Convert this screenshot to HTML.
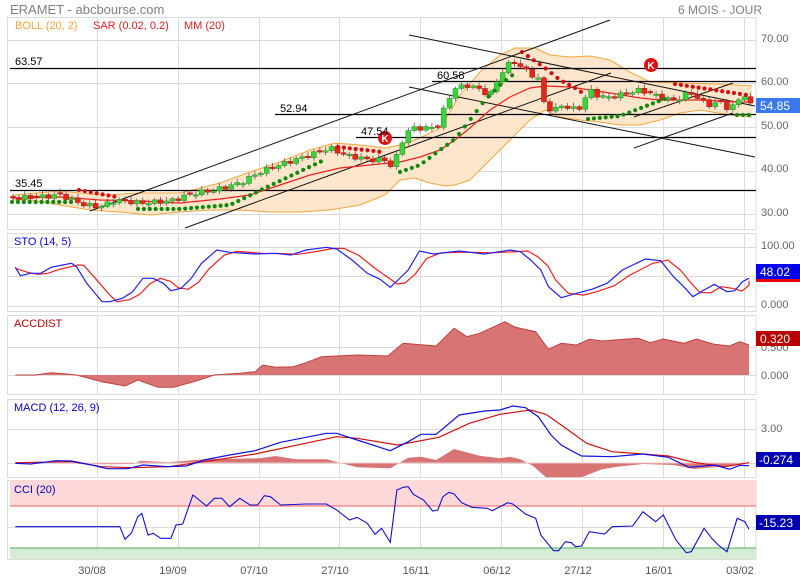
<!DOCTYPE html>
<html><head><meta charset="utf-8"><style>
html,body{margin:0;padding:0;background:#fff;width:800px;height:580px;overflow:hidden}
svg{display:block;font-family:"Liberation Sans",sans-serif}
</style></head><body>
<svg id="s" width="800" height="580" viewBox="0 0 800 580" xmlns="http://www.w3.org/2000/svg">
<rect width="800" height="580" fill="#fff"/>
<text x="10" y="14" font-size="13" fill="#808080">ERAMET - abcbourse.com</text>
<text x="678" y="14" font-size="12" fill="#808080">6 MOIS - JOUR</text>
<g id="grid" stroke="#dcdcdc" stroke-width="1" fill="none"></g>
<rect x="10" y="480" width="746" height="26" fill="#fdd8d8"/>
<rect x="10" y="548" width="746" height="11" fill="#d6ecd6"/>
<line x1="10" y1="506" x2="756" y2="506" stroke="#f06060"/>
<line x1="10" y1="548" x2="756" y2="548" stroke="#50b050"/>
<g id="main"></g>
<g id="lower"></g>
<g font-size="11">
<text x="15" y="29" fill="#f5a53a">BOLL (20, 2)</text>
<text x="93" y="29" fill="#e02020">SAR (0.02, 0.2)</text>
<text x="184" y="29" fill="#e02020">MM (20)</text>
<text x="15" y="65" fill="#000">63.57</text>
<text x="15" y="187" fill="#000">35.45</text>
<text x="280" y="112" fill="#000">52.94</text>
<text x="361" y="135" fill="#000">47.54</text>
<text x="437" y="79" fill="#000">60.58</text>
<text x="14" y="245" fill="#0000e0">STO (14, 5)</text>
<text x="14" y="327" fill="#c00000">ACCDIST</text>
<text x="14" y="411" fill="#0000c0">MACD (12, 26, 9)</text>
<text x="14" y="493" fill="#0000c0">CCI (20)</text>
<g fill="#666">
<text x="761" y="42">70.00</text><text x="761" y="85">60.00</text><text x="761" y="129">50.00</text><text x="761" y="172">40.00</text><text x="761" y="216">30.00</text>
<text x="761" y="249">100.00</text><text x="761" y="308">0.000</text>
<text x="761" y="379">0.000</text><text x="761" y="351">0.500</text>
<text x="761" y="432">3.00</text>
</g>
<g fill="#555" text-anchor="middle">
<text x="92" y="574">30/08</text><text x="173" y="574">19/09</text><text x="254" y="574">07/10</text><text x="335" y="574">27/10</text><text x="416" y="574">16/11</text><text x="497" y="574">06/12</text><text x="578" y="574">27/12</text><text x="659" y="574">16/01</text><text x="740" y="574">03/02</text>
</g>
<rect x="756" y="98" width="44" height="15" fill="#3a78f0"/><text x="760" y="110" fill="#fff" font-size="12">54.85</text>
<rect x="756" y="264" width="44" height="15" fill="#0000ee"/><rect x="756" y="279" width="44" height="3" fill="#ee0000"/><text x="760" y="276" fill="#fff" font-size="12">48.02</text>
<rect x="756" y="331" width="44" height="15" fill="#b80000"/><text x="760" y="343" fill="#fff" font-size="12">0.320</text>
<rect x="756" y="452" width="44" height="15" fill="#0000b0"/><text x="759" y="464" fill="#fff" font-size="12">-0.274</text>
<rect x="756" y="515" width="44" height="15" fill="#0000b0"/><text x="759" y="527" fill="#fff" font-size="12">-15.23</text>
</g>
</svg>
<script>
var NS="http://www.w3.org/2000/svg";
function el(p,t,a){var e=document.createElementNS(NS,t);for(var k in a)e.setAttribute(k,a[k]);p.appendChild(e);return e;}
var G=document.getElementById('grid'),M=document.getElementById('main'),L=document.getElementById('lower');
var panels=[[17,229],[233,311],[315,394],[399,477],[480,559]];
var vx=[97,178,259,339,420,501,582,663,744];
panels.forEach(function(p){el(G,'rect',{x:7.5,y:p[0]+.5,width:748.5,height:p[1]-p[0]});vx.forEach(function(x){el(G,'line',{x1:x+.5,y1:p[0],x2:x+.5,y2:p[1]});});});
[40,83,127,171,214, 247,276,306, 347,375, 429,463, 527].forEach(function(y){el(G,'line',{x1:8,y1:y+.5,x2:756,y2:y+.5});});
function ps(a){return a.map(function(p){return p[0]+','+p[1]}).join(' ');}
function interp(k,x){for(var i=0;i<k.length-1;i++){if(x<=k[i+1][0]){var t=(x-k[i][0])/(k[i+1][0]-k[i][0]);return k[i][1]+t*(k[i+1][1]-k[i][1]);}}return k[k.length-1][1];}
var up=[[12,195],[60,191],[100,195],[140,193],[180,193],[220,183],[250,172],[280,162],[310,150],[335,143],[360,145],[385,148],[400,145],[420,138],[440,128],[460,95],[480,72],[500,55],[515,48],[535,48],[550,55],[570,57],[590,56],[610,60],[630,72],[650,82],[680,83],[720,84],[752,86]];
var lo=[[752,117],[730,115],[700,110],[680,113],[660,120],[640,125],[620,125],[600,122],[580,120],[560,117],[545,110],[530,120],[515,135],[500,150],[485,165],[470,180],[455,185],[445,186],[430,183],[415,178],[400,180],[385,195],[360,205],[330,210],[300,212],[270,212],[240,210],[210,210],[180,212],[150,215],[120,212],[90,210],[60,205],[30,200],[12,200]];
el(M,'polygon',{points:ps(up.concat(lo)),fill:'#fde6cc',stroke:'none'});
el(M,'polyline',{points:ps(up),fill:'none',stroke:'#f5a53a','stroke-width':1});
el(M,'polyline',{points:ps(lo),fill:'none',stroke:'#f5a53a','stroke-width':1});
[[10,68],[10,190],[275,114],[356,137],[432,81]].forEach(function(h){el(M,'line',{x1:h[0],y1:h[1]+.5,x2:756,y2:h[1]+.5,stroke:'#000','stroke-width':1.2});});
[[90,211,610,20],[185,228,611,73],[409,35,755,106],[409,87,755,157],[634,117,733,83],[634,148,733,113]].forEach(function(l){el(M,'line',{x1:l[0],y1:l[1],x2:l[2],y2:l[3],stroke:'#111','stroke-width':1});});
var mm=[[12,198],[60,197],[100,200],[140,201],[180,203],[220,199],[250,195],[280,185],[310,175],[340,168],[370,165],[400,162],[420,157],[440,150],[455,140],[470,128],[490,110],[510,97],[530,88],[545,86],[570,87],[590,90],[610,93],[640,98],[660,100],[700,100],[740,102],[752,102]];
el(M,'polyline',{points:ps(mm),fill:'none',stroke:'#f02020','stroke-width':1.2});
var pk=[[12,198],[40,197],[60,195],[85,205],[100,207],[115,200],[140,203],[170,201],[195,193],[215,190],[240,183],[260,172],[270,168],[285,163],[310,155],[330,148],[345,155],[370,160],[385,160],[393,168],[400,145],[410,128],[430,128],[440,125],[445,105],[455,88],[470,85],[480,90],[490,95],[500,75],[507,65],[515,62],[525,70],[535,77],[540,80],[545,108],[555,110],[560,105],[570,108],[578,110],[590,90],[600,97],[610,97],[620,95],[640,90],[655,95],[670,100],[680,98],[690,92],[700,100],[710,105],[720,102],[730,110],[738,100],[745,95],[752,103]];
var step=5.9,prev=198;
var cx=[];
for(var x=13;x<=752;x+=step){cx.push(x);}
cx.forEach(function(x,j){var c=interp(pk,x)+Math.sin(j*2.3)*2.2;if(j==cx.length-1)c=103;var o=prev;if(Math.abs(c-o)<1.2)o=c+(j%2?1.5:-1.5);var top=Math.min(o,c),bot=Math.max(o,c);var g=c<o;
el(M,'line',{x1:x,y1:top-2-(j%3),x2:x,y2:bot+2+(j%2),stroke:'#555','stroke-width':.8});
el(M,'rect',{x:x-2.5,y:top,width:5,height:Math.max(bot-top,1.5),fill:g?'#3ad43a':'#e02818',stroke:g?'#2a8a2a':'#b01010','stroke-width':.5});prev=c;});
var sar=[['g',[[12,202],[75,202]]],['r',[[79,190],[117,197]]],['g',[[138,209],[180,209],[230,205],[263,189],[322,161]]],['r',[[338,147],[383,152]]],['g',[[400,172],[420,165],[440,150],[455,139],[470,120],[485,100],[500,85],[515,73]]],['r',[[522,52],[545,68],[560,80],[575,88],[586,95]]],['g',[[588,119],[620,116],[667,98]]],['r',[[675,84],[747,95]]],['g',[[737,115],[752,115]]]];
sar.forEach(function(s){var k=s[1];for(var x=k[0][0];x<=k[k.length-1][0]+.1;x+=step){el(M,'circle',{cx:x,cy:interp(k,x),r:2.1,fill:s[0]=='g'?'#118811':'#d01010'});}});
[[385,138],[651,65]].forEach(function(p){el(M,'circle',{cx:p[0],cy:p[1],r:7,fill:'#e01010'});var t=el(M,'text',{x:p[0],y:p[1]+4,'font-size':10,'font-weight':'bold',fill:'#fff','text-anchor':'middle'});t.textContent='K';});
function Z(a){return a.map(function(p){return [(p[0]/1.96).toFixed(1),(230+p[1]/3).toFixed(1)];});}
var sto=[[30,112],[40,137],[60,130],[80,130],[100,112],[140,100],[150,110],[170,160],[200,215],[215,215],[240,205],[260,185],[280,145],[300,145],[320,160],[335,182],[355,175],[375,145],[395,100],[425,60],[450,67],[500,72],[540,70],[570,75],[600,60],[640,52],[660,57],[690,90],[720,130],[745,148],[765,172],[780,150],[800,120],[822,63],[850,72],[900,63],[950,72],[1000,60],[1020,65],[1040,90],[1060,120],[1075,170],[1100,203],[1130,190],[1160,178],[1190,160],[1220,120],[1265,87],[1295,92],[1320,140],[1340,170],[1358,200],[1380,180],[1400,163],[1425,185],[1440,182],[1455,155],[1468,145]];
var stoR=[[30,115]].concat(sto.slice(1).map(function(p,i){return [Math.min(p[0]+14,1468),(p[1]*.6+sto[i][1]*.4)];}));
stoR[stoR.length-1]=[1468,152];
el(L,'polyline',{points:ps(Z(stoR)),fill:'none',stroke:'#f02020','stroke-width':1.2});
el(L,'polyline',{points:ps(Z(sto)),fill:'none',stroke:'#2020f0','stroke-width':1.2});
var acc=[[30,435],[70,435],[100,428],[130,432],[150,435],[200,455],[245,468],[270,450],[310,472],[340,472],[380,455],[420,435],[470,430],[500,425],[515,405],[540,412],[575,410],[600,398],[630,380],[700,375],[760,378],[790,340],[855,348],[890,295],[915,320],[940,310],[990,275],[1010,292],[1050,305],[1075,358],[1100,340],[1130,345],[1155,328],[1180,333],[1250,325],[1275,338],[1300,327],[1340,340],[1365,327],[1400,343],[1430,348],[1450,335],[1468,345]];
el(L,'polygon',{points:ps(Z([[30,435]].concat(acc,[[1468,435]]))),fill:'#d97474',stroke:'none'});
el(L,'polyline',{points:ps(Z(acc)),fill:'none',stroke:'#c04040','stroke-width':1});
var hist=[[30,699],[140,697],[200,703],[260,702],[275,692],[330,697],[400,688],[510,685],[540,678],[580,688],[640,688],[700,712],[765,715],[800,683],[825,680],[855,690],[890,657],[940,677],[980,685],[1000,680],[1020,688],[1045,708],[1070,742],[1140,742],[1180,718],[1210,710],[1260,702],[1320,705],[1360,717],[1400,712],[1430,708],[1468,697]];
el(L,'polygon',{points:ps(Z([[30,699]].concat(hist,[[1468,699]]))),fill:'#d97474',stroke:'none'});
el(L,'line',{x1:15,y1:463,x2:749,y2:463,stroke:'#eecccc','stroke-width':1});
var mr=[[30,698],[140,695],[200,710],[260,713],[330,710],[400,695],[500,672],[660,620],[700,625],[780,645],[860,622],[920,580],[980,553],[1040,540],[1070,553],[1100,585],[1150,640],[1200,665],[1260,672],[1310,678],[1360,697],[1420,710],[1468,698]];
var mb=[[30,700],[60,702],[110,692],[140,693],[180,705],[210,716],[250,716],[280,705],[330,710],[365,708],[400,690],[450,675],[500,662],[550,637],[590,625],[640,610],[660,610],[700,630],[765,662],[800,635],[825,613],[855,613],[900,555],[950,543],[980,540],[1005,528],[1030,533],[1055,560],[1080,615],[1100,645],[1120,662],[1140,678],[1200,680],[1260,672],[1310,682],[1350,712],[1400,705],[1430,718],[1450,706],[1468,707]];
el(L,'polyline',{points:ps(Z(mr)),fill:'none',stroke:'#d01010','stroke-width':1.2});
el(L,'polyline',{points:ps(Z(mb)),fill:'none',stroke:'#1010e0','stroke-width':1.2});
var cci=[[30,890],[235,890],[245,928],[258,908],[270,860],[278,850],[290,915],[300,910],[315,925],[335,925],[345,885],[358,882],[378,795],[405,828],[420,805],[435,805],[450,830],[470,805],[490,825],[505,825],[518,797],[530,800],[550,825],[600,822],[640,822],[660,840],[685,870],[700,862],[720,880],[735,913],[748,895],[765,937],[778,780],[790,772],[800,770],[810,793],[830,810],[848,843],[858,840],[868,800],[880,787],[890,792],[905,818],[925,832],[955,835],[965,842],[995,818],[1005,822],[1030,852],[1050,865],[1060,915],[1085,962],[1095,962],[1108,935],[1120,938],[1128,950],[1140,948],[1155,905],[1185,912],[1200,890],[1240,888],[1260,845],[1285,875],[1300,855],[1325,930],[1345,968],[1355,965],[1380,895],[1395,925],[1410,948],[1425,965],[1445,865],[1460,875],[1468,898]];
el(L,'polyline',{points:ps(Z(cci)),fill:'none',stroke:'#1010d0','stroke-width':1.1});
</script>
</body></html>
